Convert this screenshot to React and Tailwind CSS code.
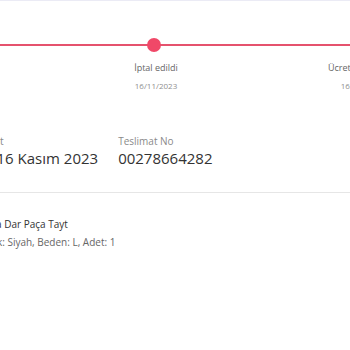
const steps = [
  { label: "Sipariş oluşturuldu", date: "15/11/2023" },
  { label: "İptal edildi", date: "16/11/2023" },
  { label: "Ücret iade edildi", date: "16/11/2023" },
];

const App = () => {
  return (
    <div
      className="w-[350px] h-[350px] overflow-hidden bg-white border-t border-[#ebebf5]"
      style={{ fontFamily: '"Open Sans", "Liberation Sans", sans-serif' }}
    >
      {/* TIMELINE */}
      <div className="relative mt-[43px] h-[2px] bg-[#e5526d]">
        <div className="absolute left-[147px] top-[-6px] w-[14px] h-[14px] rounded-full bg-[#f04868]" />
      </div>
      <div className="flex ml-[-153px] mt-[16px]">
        {steps.map((s, i) => (
          <div key={i} className="w-[206px] shrink-0 flex flex-col items-center">
            <span className="text-[9px] leading-[12px] text-[#666]">{s.label}</span>
            <span className="text-[8px] leading-[10px] mt-[7px] text-[#8f8f8f]">{s.date}</span>
          </div>
        ))}
      </div>

      {/* ORDER INFO */}
      <div className="flex gap-[20px] ml-[-78px] mt-[43px]">
        <div className="flex flex-col">
          <span className="text-[10.25px] leading-[14px] text-[#8a8a8a]">Tahmini Teslimat</span>
          <span className="text-[15px] leading-[20px] text-[#333]">Perşembe 16 Kasım 2023</span>
        </div>
        <div className="flex flex-col">
          <span className="text-[10px] leading-[14px] text-[#8a8a8a]">Teslimat No</span>
          <span className="text-[15px] leading-[20px] text-[#333]">00278664282</span>
        </div>
      </div>

      <div className="mt-[24px] h-px bg-[#e6e6e6]" />

      {/* PRODUCT */}
      <div className="flex flex-col ml-[-21px] mt-[24px]">
        <span className="text-[10px] leading-[14px] text-[#333]">Yoga Dar Paça Tayt</span>
        <span className="text-[10px] leading-[13px] mt-[5px] text-[#666]">Renk: Siyah, Beden: L, Adet: 1</span>
      </div>
    </div>
  );
};

export default App;
